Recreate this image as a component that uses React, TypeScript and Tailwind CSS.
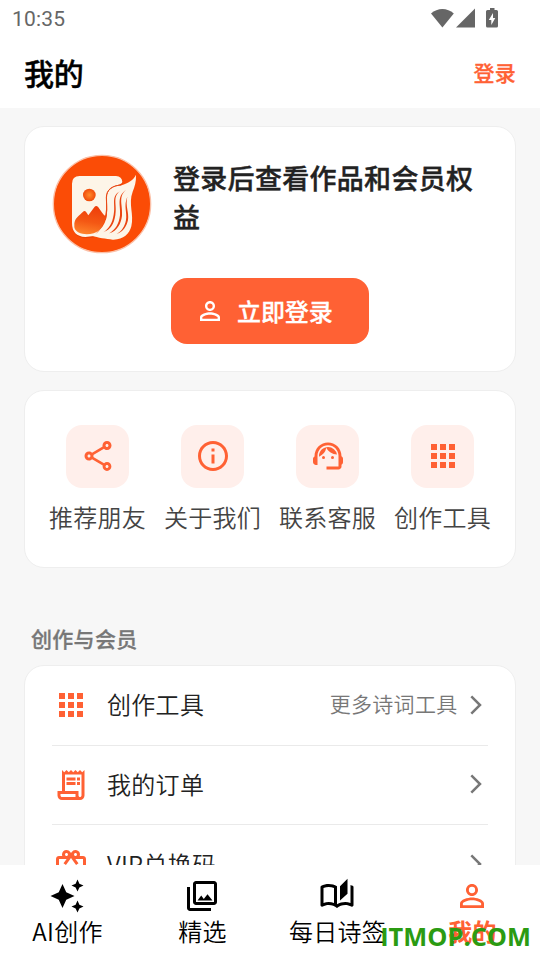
import React from 'react';
import type { IconType } from 'react-icons';
import {
    MdApps,
    MdAutoAwesome,
    MdOutlineAutoStories,
    MdOutlineCardGiftcard,
    MdOutlineInfo,
    MdOutlinePersonOutline,
    MdOutlinePhotoLibrary,
    MdOutlineReceiptLong,
    MdOutlineShare,
    MdSupportAgent,
} from 'react-icons/md';

type Shortcut = {
    label: string;
    icon: IconType;
}

type MenuRow = Shortcut & {
    hint?: string;
}

type Tab = Shortcut & {
    active?: boolean;
}

const shortcuts: Shortcut[] = [
    { label: '推荐朋友', icon: MdOutlineShare },
    { label: '关于我们', icon: MdOutlineInfo },
    { label: '联系客服', icon: MdSupportAgent },
    { label: '创作工具', icon: MdApps },
];

const menuRows: MenuRow[] = [
    { label: '创作工具', icon: MdApps, hint: '更多诗词工具' },
    { label: '我的订单', icon: MdOutlineReceiptLong },
    { label: 'VIP兑换码', icon: MdOutlineCardGiftcard },
];

const tabs: Tab[] = [
    { label: 'AI创作', icon: MdAutoAwesome },
    { label: '精选', icon: MdOutlinePhotoLibrary },
    { label: '每日诗签', icon: MdOutlineAutoStories },
    { label: '我的', icon: MdOutlinePersonOutline, active: true },
];

// Wifi, signal and battery in one strip
const StatusIcons = () => (
    <svg viewBox="0 0 68 21" className="h-[21px] w-[68px]" fill="#666666">
        <path d="M0 5.6C6.5-.6 16.3-.6 22.8 5.6L11.4 19.5Z" />
        <path d="M25 19.5H44V.5Z" />
        <path
            d="M59 0H63.5V2H65.5Q67 2 67 3.5V18Q67 19.5 65.5 19.5H56.5Q55 19.5 55 18V3.5Q55 2 56.5 2H59ZM62 5L57.8 12H60.3V17L64.3 10.1H62Z"
            fillRule="evenodd"
        />
    </svg>
);

const Avatar = () => (
    <svg viewBox="36 42 300 300" className="h-[100px] w-[100px] shrink-0">
        <defs>
            <linearGradient id="hill" x1="0.5" y1="0" x2="0.3" y2="1">
                <stop offset="0" stopColor="#ee3e0a" />
                <stop offset="0.55" stopColor="#f45814" />
                <stop offset="1" stopColor="#ff852c" />
            </linearGradient>
            <radialGradient id="sun">
                <stop offset="0" stopColor="#ff8a2b" />
                <stop offset="1" stopColor="#f04a0a" />
            </radialGradient>
        </defs>
        <circle cx="186" cy="192" r="146" fill="#fb4c06" stroke="#fbc0a8" strokeWidth="4" />
        <path
            d="M119 108H228Q246 109 247 126C246 136 223 133 209 147C192 163 201 188 198 209C195 246 182 266 162 288L136 291Q96 289 96 249V131Q96 108 119 108Z"
            fill="#c83300"
            opacity=".35"
            transform="translate(1 4)"
        />
        <path
            d="M119 108H228Q246 109 247 126C246 136 223 133 209 147C192 163 201 188 198 209C195 246 182 266 162 288L136 291Q96 289 96 249V131Q96 108 119 108Z"
            fill="#fdf5e8"
        />
        <circle cx="148" cy="165" r="19" fill="url(#sun)" />
        <path
            d="M103 250C107 231 117 228 131 214Q136 211 140 218L145 226L164 200Q169 195 175 202L187 219Q192 226 197 229C193 253 181 274 161 280C137 286 107 282 103 262Z"
            fill="url(#hill)"
        />
        <path
            d="M288 104C280 122 265 128 244 136C219 138 201 149 201 173C201 207 207 243 179 270C172 279 164 284 156 287C173 293 199 296 218 299C250 300 268 282 274 259C283 222 264 193 278 155C284 140 289 125 288 104Z"
            fill="#fdf5e8"
        />
        <path d="M244 135C217 137 199 148 199 173C200 200 202 220 196 240" fill="none" stroke="#e84a1a" strokeWidth="3" />
        <g fill="#ea4411">
            <path d="M240 154C211 169 228 195 221 224C217 250 206 266 190 277C212 269 222 252 226 226C232 195 216 171 240 154Z" />
            <path d="M258 149C228 172 243 196 240 226C237 252 226 269 208 280C232 272 243 251 246 227C249 195 233 172 258 149Z" />
            <path d="M262 170C250 198 262 217 258 240C254 260 246 273 230 282C250 276 260 258 264 240C268 217 255 198 262 170Z" />
        </g>
    </svg>
);

const ChevronRight = () => (
    <svg viewBox="0 0 12 20" className="-mt-px h-5 w-3 shrink-0" fill="none" stroke="#777777" strokeWidth="2.5">
        <path d="M1.3 1.3L10 10L1.3 18.7" />
    </svg>
);

const App = () => {
    return (
        <div className="relative flex h-[960px] w-[540px] flex-col overflow-hidden bg-[#f7f7f7] font-['Noto_Sans_CJK_SC',sans-serif] font-[350] tracking-[0.3px]">

            {/* Status bar */}
            <div className="flex h-9 shrink-0 items-center justify-between bg-white pl-3 pr-[41px] text-[#666666]">
                <span className="pt-0.5 font-[Roboto,sans-serif] text-[21px] font-normal leading-9 tracking-[0.2px]">10:35</span>
                <StatusIcons />
            </div>

            {/* Page header */}
            <header className="flex h-18 shrink-0 items-center justify-between bg-white px-6">
                <h1 className="text-[30px] font-medium leading-[44px] tracking-[-0.3px] text-black [-webkit-text-stroke:0.4px]">我的</h1>
                <button className="pt-0.5 text-[21px] font-medium text-[#ff6134] [-webkit-text-stroke:0.3px]">登录</button>
            </header>

            <main className="min-h-0 flex-1 overflow-hidden px-6 pt-[18px]">

                {/* Login card */}
                <section className="flex h-[246px] flex-col rounded-[20px] border-[1.5px] border-[#eeeeee] bg-white px-[27px] pt-[27px]">
                    <div className="flex gap-[21px]">
                        <Avatar />
                        <p className="pt-1 text-[27px] font-medium leading-[39px] tracking-[0.3px] text-[#222222] [-webkit-text-stroke:0.4px]">
                            登录后查看作品和会员权益
                        </p>
                    </div>
                    <button className="mt-[23.5px] flex h-[66px] w-[198px] items-center gap-3 self-center rounded-2xl bg-[#ff6134] pl-6 text-2xl font-medium tracking-[-0.1px] text-white [-webkit-text-stroke:0.3px]">
                        <MdOutlinePersonOutline className="h-[30px] w-[30px]" strokeWidth={0} />
                        立即登录
                    </button>
                </section>

                {/* Shortcuts */}
                <section className="mt-[18px] grid h-[178px] grid-cols-4 rounded-[20px] border-[1.5px] border-[#eeeeee] bg-white px-[15px] pt-[33.5px]">
                    {shortcuts.map(({ label, icon: Icon }) => (
                        <div key={label} className="flex flex-col items-center">
                            <div className="flex h-[63px] w-[63px] items-center justify-center rounded-2xl bg-[#ffefeb] text-[#ff6134]">
                                <Icon className="h-9 w-9" />
                            </div>
                            <span className="mt-[11.5px] whitespace-nowrap text-2xl leading-9 text-[#444444]">{label}</span>
                        </div>
                    ))}
                </section>

                {/* Works & membership */}
                <h2 className="mt-[54px] pl-[7px] text-[21px] font-medium leading-8 text-[#777777] [-webkit-text-stroke:0.3px]">创作与会员</h2>
                <section className="mt-[11px] rounded-[20px] border-[1.5px] border-[#eeeeee] bg-white px-[27px]">
                    {menuRows.map(({ label, icon: Icon, hint }) => (
                        <div key={label} className="flex h-[79.5px] items-center border-b-[1.5px] border-[#eaeaea] pr-[6.5px] last:border-b-0">
                            <Icon className="ml-[0.5px] h-9 w-9 text-[#ff6134]" />
                            <span className="-mt-0.5 ml-[18.5px] text-2xl text-[#222222]">{label}</span>
                            <span className="-mt-[3px] ml-auto mr-3 text-[21px] text-[#777777]">{hint}</span>
                            <ChevronRight />
                        </div>
                    ))}
                </section>
            </main>

            {/* Bottom tabs */}
            <nav className="grid h-[95px] shrink-0 grid-cols-4 bg-white pt-[13px]">
                {tabs.map(({ label, icon: Icon, active }) => (
                    <div key={label} className={`flex flex-col items-center ${active ? 'font-bold text-[#ff6134]' : 'text-black'}`}>
                        <Icon className="mr-px h-9 w-9" />
                        <span className="-mt-px text-2xl leading-9">{label}</span>
                    </div>
                ))}
            </nav>

            <div className="absolute bottom-1.5 right-[9px] font-['Open_Sans',sans-serif] text-[25.4px] font-bold leading-9 tracking-normal text-[#2b9b12]">
                ITMOP.COM
            </div>
        </div>
    )
}

export default App;
